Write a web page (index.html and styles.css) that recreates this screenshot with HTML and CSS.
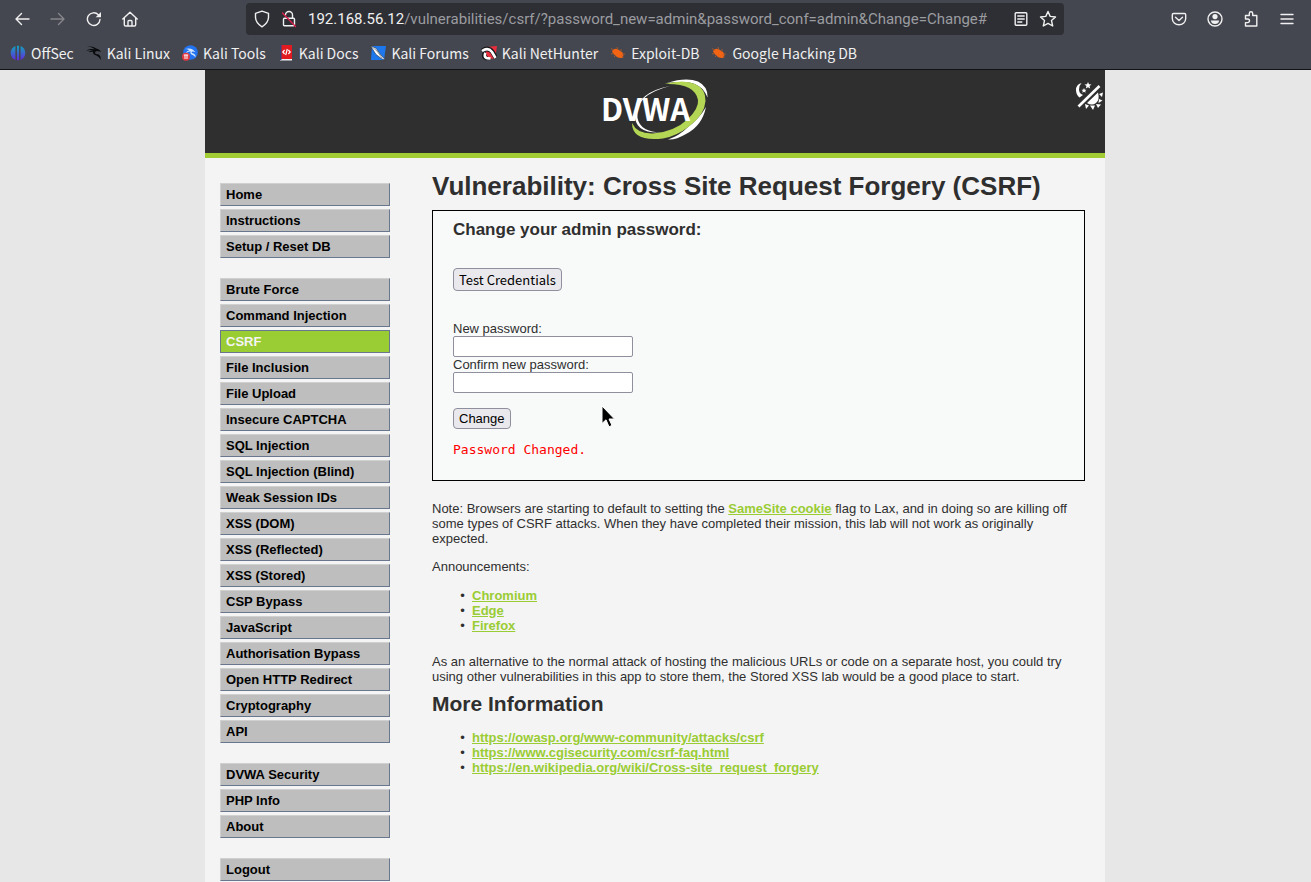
FILE: index.html
```
<!DOCTYPE html>
<html lang="en">
<head>
<meta charset="utf-8">
<title>Vulnerability: Cross Site Request Forgery (CSRF)</title>
<link rel="stylesheet" href="styles.css">
</head>
<body>
<header class="chrome">
  <div class="toolbar">
    <div class="nav-buttons">
      <button class="icon-btn" aria-label="Back"><svg width="16" height="16" viewBox="0 0 16 16"><path d="M15 8H2M7.500 2.500L2 8l5.500 5.500"/></svg></button>
      <button class="icon-btn dim" aria-label="Forward"><svg width="16" height="16" viewBox="0 0 16 16"><path d="M1 8h13M8.500 2.500L14 8l-5.500 5.500"/></svg></button>
      <button class="icon-btn" aria-label="Reload"><svg width="16" height="16" viewBox="0 0 16 16"><path d="M14 8.500A6.300 6.300 0 1 1 12.300 3.800"/><path class="solid" d="M15 1v5.300H9.700z"/></svg></button>
      <button class="icon-btn" aria-label="Home"><svg width="16" height="16" viewBox="0 0 16 16"><path d="M.8 8L8 1.200 15.200 8M2.300 7v6.700q0 1.300 1.300 1.300h8.800q1.300 0 1.300-1.300V7M6 15v-4.500q0-1 1-1h2q1 0 1 1V15"/></svg></button>
    </div>
    <div class="urlbar">
      <svg class="ic" width="16" height="18" viewBox="0 0 16 18"><path d="M8 1.200L14.500 3.300V7.500Q14.200 13 8 16.800Q1.800 13 1.500 7.500V3.300z"/></svg>
      <svg class="ic" width="16" height="18" viewBox="0 0 16 18"><path d="M4.500 5a3.500 3.500 0 0 1 7 0v3M3.500 8.200h9q1 0 1 1v5.600q0 1-1 1h-9q-1 0-1-1V9.200q0-1 1-1z"/><path class="slash" d="M1.500 3L14.500 16.500"/></svg>
      <div class="url" role="textbox" aria-label="Address"><span class="host">192.168.56.12</span>/vulnerabilities/csrf/?password_new=admin&amp;password_conf=admin&amp;Change=Change#</div>
      <button class="icon-btn" aria-label="Reader view"><svg width="16" height="16" viewBox="0 0 16 16"><path d="M3.200 1.700h9.600q1 0 1 1v10.600q0 1-1 1H3.200q-1 0-1-1V2.700q0-1 1-1zM4.800 5h6.400M4.800 8h6.400M4.800 11h4"/></svg></button>
      <button class="icon-btn" aria-label="Bookmark"><svg width="18" height="18" viewBox="0 0 18 18"><path d="M9 1.500l2.200 4.900 5.300.6-4 3.600 1.200 5.400L9 13.400 4.300 16l1.200-5.400-4-3.600 5.300-.6z"/></svg></button>
    </div>
    <div class="tool-buttons">
      <button class="icon-btn" aria-label="Pocket"><svg width="16" height="16" viewBox="0 0 16 16"><path d="M2.500 2.500h11q1.200 0 1.200 1.200V7.500a6.700 6.300 0 0 1-13.400 0V3.700q0-1.200 1.200-1.200zM4.500 6.200L8 9.500l3.500-3.300"/></svg></button>
      <button class="icon-btn" aria-label="Account"><svg width="16" height="16" viewBox="0 0 16 16"><circle cx="8" cy="8" r="7"/><circle class="solid" cx="8" cy="5.600" r="2.600"/><path class="solid" d="M3.800 9.400h8.400Q11.500 12.900 8 12.900T3.800 9.400z"/></svg></button>
      <button class="icon-btn" aria-label="Extensions"><svg width="16" height="18" viewBox="0 0 16 18"><path d="M2.500 5.500H6.300V3.500a1.700 1.700 0 0 1 3.400 0v2h4.100V16H2.500v-3.400h2.200a1.500 1.500 0 0 0 0-3.600H2.500z"/></svg></button>
      <button class="icon-btn" aria-label="Menu"><svg width="14" height="16" viewBox="0 0 14 16"><path d="M1 3.500h12M1 8h12M1 12.500h12"/></svg></button>
    </div>
  </div>
  <nav class="bookmarks" aria-label="Bookmarks">
    <a href="#"><svg width="16" height="16" viewBox="0 0 16 16"><defs><linearGradient id="off" x2="0" y2="1"><stop stop-color="#12a3bd"/><stop offset="1" stop-color="#6428e0"/></linearGradient></defs><path fill="url(#off)" d="M5.400 1v14Q.7 13 .7 8T5.400 1zM7 .7h2v14.600H7zM10.600 1q4.700 2 4.700 7t-4.700 7z"/></svg>OffSec</a>
    <a href="#"><svg width="16" height="18" viewBox="0 0 18 18"><path fill="#080a0c" d="M1 1.500Q8 1.500 11.500 4q1.500 0 4 1.800L17 7.500l-4-.7Q10 7 10 9q.5 1.300 3.500 1.500 3.500 1 3 6.500Q14.500 12.500 11 11.500 7.500 10.800 8 7.500L2.500 8Q5 6.200 8.500 6L4.500 5.600Q2 6 0 7q2-2.300 5-2.500 3 0 5 .4Q6.500 2.300 1 1.500z"/></svg>Kali Linux</a>
    <a href="#"><svg width="16" height="16" viewBox="0 0 16 16"><circle cx="8.500" cy="7.500" r="7.300" fill="#2373f0"/><path d="M3 4q4.500-1.500 8 .8l2.500 2.400Q10 5.500 9.500 7.500q.5 1 2.500 1.300 2 1 1.500 3.700-1.500-2.500-4-3-1.700-1-1-3.300Q6 6.500 3.500 8.500 5 5.800 7.500 5.300 5.500 4 3 4z" fill="#d5e9ff"/><circle cx="4" cy="11.700" r="4" fill="#e23842"/><path d="M1.800 10h4.400M3 10v4M5 10v4" stroke="#fff" stroke-width="1"/></svg>Kali Tools</a>
    <a href="#"><svg width="16" height="16" viewBox="0 0 16 16"><path fill="#e01a20" d="M2 0h12v14H2z"/><path fill="#eef2f5" d="M2 14h12v1.500H2z"/><path fill="#34447a" d="M2 0h1.500v15H2z"/><path d="M6.600 5L4.800 7l1.800 2M10.400 5l1.800 2-1.800 2M9.300 4L7.700 10" fill="none" stroke="#fff" stroke-width="1.200"/></svg>Kali Docs</a>
    <a href="#"><svg width="16" height="16" viewBox="0 0 16 16"><path fill="#1d78ed" d="M2 1h14l-2 14H1z"/><path fill="#fff" stroke="#16191f" stroke-width=".5" d="M.3.500L6 3.200l4.500 6.300L15.500 15l-3.800-1.200L6 9.500z"/><path d="M1 1l6 5 5 7" fill="none" stroke="#42535f" stroke-width=".6"/></svg>Kali Forums</a>
    <a href="#"><svg width="16" height="16" viewBox="0 0 16 16"><path fill="#e92d3c" d="M5 2l11-1-2 13-9-1z"/><path fill="none" stroke="#17191c" stroke-width="4.600" d="M1 6Q7 1.500 11.500 7L15 13M4 8q-2.500 4 2 5.500"/><path fill="none" stroke="#fff" stroke-width="2.600" d="M1 6Q7 2 11 7L14.500 13M4.500 8q-2 3.500 1 5l4 .5"/></svg>Kali NetHunter</a>
    <a href="#"><svg width="16" height="16" viewBox="0 0 16 16"><path fill="#f26414" d="M2 6q3-4 6.500-1.200L12.500 7.500q2 4-.5 5.500-4 .4-7-2.500T2 6z"/><path fill="none" stroke="#a9592e" stroke-width=".9" d="M.8 3.500L4 5M7 2l1 3M11 4v3M1 9l3-.5M4 12l2-2M12 9h3M13.500 12.500l-2-2"/></svg>Exploit-DB</a>
    <a href="#"><svg width="16" height="16" viewBox="0 0 16 16"><path fill="#f26414" d="M2 6q3-4 6.500-1.200L12.500 7.500q2 4-.5 5.500-4 .4-7-2.500T2 6z"/><path fill="none" stroke="#a9592e" stroke-width=".9" d="M.8 3.500L4 5M7 2l1 3M11 4v3M1 9l3-.5M4 12l2-2M12 9h3M13.500 12.500l-2-2"/></svg>Google Hacking DB</a>
  </nav>
</header>
<div class="viewport">
  <div class="page">
    <div class="banner">
      <svg width="110" height="66" viewBox="0 0 110 66" role="img" aria-label="DVWA">
        <path fill="#fff" d="M67 5Q86-1 98 3.500q10 5 9.500 16Q102 5 85 4 76 3.500 67 5z"/>
        <path fill="#fff" d="M70 8Q34 17 37.500 40 40 54 62 54.500 34 56 35 36 38 14 70 8z"/>
        <path fill="#fff" d="M106 29Q102 48 86 56q-10 6-18 5.500Q79 58 88 49q11-8 18-20z"/>
        <path fill="#b3d654" d="M64.500 6Q84 1 95 6q11 5 10.500 17-1 14-16 25Q77 58 63 60.500 32 64 32 45q5 11 21 10.500Q74 54 88 41q11-11 10-19Q95 5 64.500 6z"/>
        <text class="logo-text" x="1" y="43">DVWA</text>
      </svg>
      <button class="theme" aria-label="Toggle theme"><svg width="28" height="30" viewBox="0 0 28 30"><path fill="#fff" d="M5.500 2Q0 3.500 0 9q0 5 3.500 7.500L7 14Q3 12.500 3 8.500 3 4.500 5.500 2zM12 1l1 2.300 2.500.2-2 1.500.7 2.500L12 6.200 9.800 7.500l.7-2.500-2-1.500 2.500-.2zM8 7l.8 1.700h1.700l-1.300 1.200.5 1.800L8 10.800l-1.700.9.5-1.800-1.300-1.200h1.700z"/><path fill="none" stroke="#fff" stroke-width="2.600" d="M2.500 25.500L23.500 5"/><path fill="#fff" d="M11 22L22 11.500q2 7.500-2 10.500-4 3-9 0zM23 13l4-1.500-1 4.500zM23 18l3.500 1.500-4 2.500zM20 23l5 .5-3 3.500zM14 24.500h5L17 29zM9 23l4 1.500-3 3.500z"/></svg></button>
    </div>
    <div class="columns">
      <nav class="menu" aria-label="Main menu">
        <ul><li><a href="#">Home</a></li><li><a href="#">Instructions</a></li><li><a href="#">Setup / Reset DB</a></li></ul>
        <ul><li><a href="#">Brute Force</a></li><li><a href="#">Command Injection</a></li><li><a class="selected" href="#">CSRF</a></li><li><a href="#">File Inclusion</a></li><li><a href="#">File Upload</a></li><li><a href="#">Insecure CAPTCHA</a></li><li><a href="#">SQL Injection</a></li><li><a href="#">SQL Injection (Blind)</a></li><li><a href="#">Weak Session IDs</a></li><li><a href="#">XSS (DOM)</a></li><li><a href="#">XSS (Reflected)</a></li><li><a href="#">XSS (Stored)</a></li><li><a href="#">CSP Bypass</a></li><li><a href="#">JavaScript</a></li><li><a href="#">Authorisation Bypass</a></li><li><a href="#">Open HTTP Redirect</a></li><li><a href="#">Cryptography</a></li><li><a href="#">API</a></li></ul>
        <ul><li><a href="#">DVWA Security</a></li><li><a href="#">PHP Info</a></li><li><a href="#">About</a></li></ul>
        <ul><li><a href="#">Logout</a></li></ul>
      </nav>
      <main class="content">
        <h1>Vulnerability: Cross Site Request Forgery (CSRF)</h1>
        <section class="panel">
          <h3>Change your admin password:</h3>
          <button class="btn test" type="button">Test Credentials</button>
          <form>
            <label for="new">New password:</label>
            <input id="new" type="password">
            <label for="conf">Confirm new password:</label>
            <input id="conf" type="password">
            <button class="btn change" type="button">Change</button>
          </form>
          <pre>Password Changed.</pre>
          <svg class="cursor" width="14" height="24" viewBox="0 0 14 24"><path d="M1 1v17.500l4-3.700 3 7 3-1.400-3-6.400h5.500z" fill="#000" stroke="#fff"/></svg>
        </section>
        <p>Note: Browsers are starting to default to setting the <a href="#">SameSite cookie</a> flag to Lax, and in doing so are killing off some types of CSRF attacks. When they have completed their mission, this lab will not work as originally expected.</p>
        <p>Announcements:</p>
        <ul class="links"><li><a href="#">Chromium</a></li><li><a href="#">Edge</a></li><li><a href="#">Firefox</a></li></ul>
        <p class="alt">As an alternative to the normal attack of hosting the malicious URLs or code on a separate host, you could try using other vulnerabilities in this app to store them, the Stored XSS lab would be a good place to start.</p>
        <h2>More Information</h2>
        <ul class="links"><li><a href="#">https://owasp.org/www-community/attacks/csrf</a></li><li><a href="#">https://www.cgisecurity.com/csrf-faq.html</a></li><li><a href="#">https://en.wikipedia.org/wiki/Cross-site_request_forgery</a></li></ul>
      </main>
    </div>
  </div>
</div>
</body>
</html>
```
FILE: styles.css
```
* { box-sizing: border-box; }
body {
  margin: 0;
  height: 100vh;
  display: flex;
  flex-direction: column;
  overflow: hidden;
  background: #e7e7e7;
  color: #2f2f2f;
  font: 13px/15px "Liberation Sans", Arial, sans-serif;
}
ul { margin: 0; padding: 0; }

/* Browser chrome */
.chrome {
  flex: none;
  background: #44474f;
  border-bottom: 1px solid #111214;
  color: #f0f0f1;
  font-family: "Noto Sans CJK SC", "Noto Sans", sans-serif;
}
.toolbar {
  display: flex;
  align-items: center;
  height: 37px;
  padding: 0 16px 0 14px;
}
.nav-buttons, .tool-buttons { display: flex; align-items: center; gap: 20px; }
.nav-buttons { flex: none; margin-right: 108px; }
.tool-buttons { flex: none; margin-left: auto; }
.icon-btn {
  display: flex;
  flex: none;
  justify-content: center;
  width: 16px;
  padding: 0;
  border: 0;
  background: none;
  color: #f0f0f1;
}
.icon-btn svg { flex: none; }
.icon-btn path, .icon-btn circle, .ic path {
  fill: none;
  stroke: currentColor;
  stroke-width: 1.4;
  stroke-linecap: round;
  stroke-linejoin: round;
}
.icon-btn .solid { fill: currentColor; stroke: none; }
.ic { flex: none; }
.ic .slash { stroke: #d9204a; }
.icon-btn.dim { color: #85878c; }
.urlbar {
  display: flex;
  align-items: center;
  gap: 11px;
  flex: 0 1 818px;
  min-width: 0;
  height: 32px;
  padding: 0 8px;
  border-radius: 4px;
  background: #2e2f34;
}
.url {
  flex: 1;
  min-width: 0;
  white-space: nowrap;
  font-family: Roboto, sans-serif;
  font-size: 15px;
  line-height: 24px;
  color: #9b9ca0;
}
.host { color: #f0f0f1; }
.bookmarks {
  display: flex;
  align-items: center;
  gap: 12px;
  height: 32px;
  padding: 0 10px;
  font-size: 14px;
  line-height: 20px;
}
.bookmarks a {
  display: flex;
  align-items: center;
  gap: 5px;
  color: inherit;
  text-decoration: none;
  white-space: nowrap;
}

/* Page */
.viewport { flex: 1; min-height: 0; overflow: hidden; padding-right: 1px; }
.page { max-width: 900px; min-height: 100%; margin: 0 auto; background: #f4f4f4; }
.banner {
  position: relative;
  display: flex;
  justify-content: center;
  height: 88px;
  padding-top: 8px;
  background: #2f2f2f;
  border-bottom: 5px solid #a1cc33;
}
.logo-text {
  fill: #fff;
  font: bold 31px "Noto Sans CJK SC", sans-serif;
}
.theme {
  position: absolute;
  top: 11px;
  right: 1px;
  padding: 0;
  border: 0;
  background: none;
}
.columns { display: flex; gap: 42px; padding: 0 20px 0 15px; }
.menu {
  flex: 0 0 170px;
  display: flex;
  flex-direction: column;
  gap: 20px;
  padding-top: 25px;
}
.menu ul { display: flex; flex-direction: column; gap: 3px; list-style: none; }
.menu a {
  display: block;
  height: 23px;
  padding: 3px 5px;
  border: 1px solid;
  border-color: #d0d0d0 #68778d #68778d #d0d0d0;
  background: #bebebe;
  color: #000;
  font-weight: bold;
  text-decoration: none;
}
.menu .selected { background: #9acc33; border-color: #68778d; color: #f4f4f4; }
.content { flex: 1; min-width: 0; padding-top: 13px; }
h1, h2, h3, p, pre { margin: 0; }
h1 { margin-bottom: 9px; font-size: 26px; line-height: 30px; }
h2 { margin: 8px 0 14px; font-size: 21px; line-height: 24px; }
h3 { margin-bottom: 28px; font-size: 17px; line-height: 20px; }
.panel {
  position: relative;
  margin-bottom: 20px;
  padding: 9px 20px 23px;
  border: 1px solid #000;
  background: #f8faf9;
}
form { display: flex; flex-direction: column; align-items: flex-start; margin: 30px 0 13px; }
input {
  width: 180px;
  height: 21px;
  border: 1px solid #8f8f9d;
  border-radius: 2px;
  background: #fff;
}
.btn {
  display: block;
  padding: 0 5px;
  border: 1px solid #8f8f9d;
  border-radius: 4px;
  background: #e9e9ed;
  color: #000;
  font: 13px/19px "Liberation Sans", Arial, sans-serif;
}
.test { font: 13px/21px "Noto Sans CJK SC", "Noto Sans", sans-serif; }
.change { margin-top: 15px; }
pre { color: #f00; font: 13px/15px "DejaVu Sans Mono", monospace; }
.cursor { position: absolute; left: 168px; top: 194px; }
.content a { color: #9acc33; font-weight: bold; }
.content p { margin-bottom: 14px; }
.content p:first-of-type { margin-bottom: 13px; }
.links { padding-left: 40px; }
.links li::marker { content: "•\00a0\00a0"; }
.content .alt { margin: 21px 0 0; }
```
